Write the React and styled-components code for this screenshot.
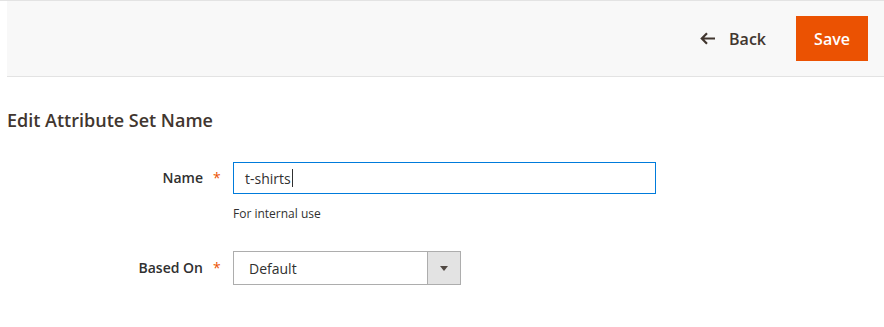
import React from 'react';
import styled, { createGlobalStyle } from 'styled-components';

const GlobalStyle = createGlobalStyle`
  * {
    box-sizing: border-box;
  }
  body {
    margin: 0;
    background: #fff;
    font-family: 'Open Sans', 'Noto Sans', sans-serif;
    color: #303030;
  }
`;

const Page = styled.div`
  border-top: 1px solid #e3e3e3;
  padding-left: 7px;
`;

const ActionsBar = styled.header`
  display: flex;
  justify-content: flex-end;
  align-items: center;
  gap: 30px;
  padding: 15px 16px;
  background: #f8f8f8;
  border-bottom: 1px solid #e3e3e3;
`;

const BackButton = styled.button`
  display: flex;
  align-items: center;
  gap: 13px;
  padding: 0;
  border: none;
  background: transparent;
  font-family: inherit;
  font-size: 16px;
  font-weight: 600;
  color: #41362f;
  cursor: pointer;
`;

const SaveButton = styled.button`
  width: 72px;
  height: 45px;
  border: none;
  background: #eb5202;
  color: #fff;
  font-family: inherit;
  font-size: 16px;
  font-weight: 600;
  cursor: pointer;
`;

const Title = styled.h2`
  margin: 31px 0 0;
  font-size: 18px;
  font-weight: 600;
  line-height: 24px;
  color: #41362f;
`;

const Fieldset = styled.div`
  display: flex;
  flex-direction: column;
  gap: 28px;
  margin-top: 30px;
`;

const Row = styled.div`
  display: grid;
  grid-template-columns: 196px 30px auto;
  align-items: start;
`;

const Label = styled.label`
  text-align: right;
  font-size: 14px;
  font-weight: 600;
  line-height: ${(p) => p.$h}px;
  color: #303030;
`;

const Required = styled.span`
  padding-left: 10px;
  font-size: 14px;
  line-height: ${(p) => p.$h}px;
  color: #eb5202;
`;

const Control = styled.div`
  display: flex;
  flex-direction: column;
`;

const TextBox = styled.div`
  display: flex;
  align-items: center;
  width: 423px;
  height: 32px;
  padding: 0 11px;
  border: 1px solid #007bdb;
  background: #fff;
  font-size: 14px;
  color: #303030;
`;

const Caret = styled.span`
  display: inline-block;
  width: 1px;
  height: 18px;
  margin-left: 1px;
  background: #303030;
`;

const Note = styled.div`
  margin-top: 11px;
  font-size: 12px;
  line-height: 18px;
  color: #303030;
`;

const SelectBox = styled.div`
  display: flex;
  width: 228px;
  height: 34px;
  border: 1px solid #adadad;
  background: #fff;
  font-size: 14px;
  color: #303030;
`;

const SelectValue = styled.div`
  flex: 1;
  display: flex;
  align-items: center;
  padding-left: 15px;
`;

const SelectArrow = styled.div`
  width: 33px;
  display: flex;
  align-items: center;
  justify-content: center;
  background: #e3e3e3;
  border-left: 1px solid #adadad;
  &::after {
    content: '';
    border-left: 4px solid transparent;
    border-right: 4px solid transparent;
    border-top: 5px solid #514943;
  }
`;

function ArrowLeft() {
  return (
    <svg width="16" height="13" viewBox="0 0 16 13" fill="none">
      <path d="M15 6.5H2.2M7 1.3L1.8 6.5 7 11.7" stroke="#41362f" strokeWidth="2.2" />
    </svg>
  );
}

export default function App() {
  return (
    <Page>
      <GlobalStyle />
      <ActionsBar>
        <BackButton>
          <ArrowLeft />
          Back
        </BackButton>
        <SaveButton>Save</SaveButton>
      </ActionsBar>

      <Title>Edit Attribute Set Name</Title>

      <Fieldset>
        <Row>
          <Label $h={32}>Name</Label>
          <Required $h={32}>*</Required>
          <Control>
            <TextBox>
              t-shirts
              <Caret />
            </TextBox>
            <Note>For internal use</Note>
          </Control>
        </Row>
        <Row>
          <Label $h={34}>Based On</Label>
          <Required $h={34}>*</Required>
          <Control>
            <SelectBox>
              <SelectValue>Default</SelectValue>
              <SelectArrow />
            </SelectBox>
          </Control>
        </Row>
      </Fieldset>
    </Page>
  );
}
